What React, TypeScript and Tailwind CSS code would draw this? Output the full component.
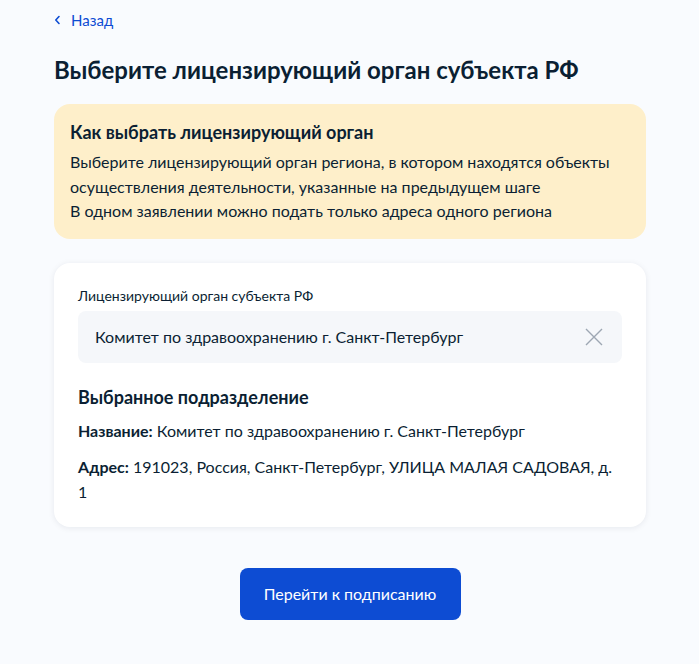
import React from "react";

export default function App() {
  return (
    <div className="min-h-screen bg-[#f9fbfe] font-['Lato','Noto_Sans',sans-serif] text-[#0b1f33]">
      <div className="w-[592px] ml-[54px] pt-[7px]">
        <a href="#" className="inline-flex items-center gap-[10px] text-[15px] text-[#0d4cd3] leading-[24px]">
          <svg width="7" height="10" viewBox="0 0 7 10" fill="none">
            <path d="M5 1.5L1.8 5L5 8.5" stroke="#0d4cd3" strokeWidth="1.6" strokeLinecap="round" strokeLinejoin="round" />
          </svg>
          Назад
        </a>

        <h1 className="mt-[22px] text-[24px] font-bold leading-[32px]">
          Выберите лицензирующий орган субъекта РФ
        </h1>

        <div className="mt-[18px] rounded-[16px] bg-[#feefca] px-4 pt-[16px] pb-[15px]">
          <h2 className="text-[18px] font-bold leading-[24px]">Как выбрать лицензирующий орган</h2>
          <p className="mt-[6px] text-[16px] leading-[24.5px]">
            Выберите лицензирующий орган региона, в котором находятся объекты осуществления деятельности,
            указанные на предыдущем шаге
            <br />
            В одном заявлении можно подать только адреса одного региона
          </p>
        </div>

        <div className="mt-6 rounded-[16px] bg-white px-6 pt-[24px] pb-[23px] shadow-[0_1px_6px_rgba(11,31,51,0.08)]">
          <label className="block text-[14px] leading-[18px]">Лицензирующий орган субъекта РФ</label>
          <div className="mt-[6px] flex h-[52px] items-center justify-between rounded-[8px] bg-[#f5f7fa] pl-[17px] pr-[19px]">
            <span className="text-[16px]">Комитет по здравоохранению г. Санкт-Петербург</span>
            <svg width="18" height="18" viewBox="0 0 18 18" fill="none">
              <path d="M1 1L17 17M17 1L1 17" stroke="#9da7b3" strokeWidth="1.4" />
            </svg>
          </div>

          <h3 className="mt-[22px] text-[18px] font-bold leading-[24px]">Выбранное подразделение</h3>
          <p className="mt-[10px] text-[16px] leading-[24px]">
            <span className="font-bold">Название:</span> Комитет по здравоохранению г. Санкт-Петербург
          </p>
          <p className="mt-[11px] text-[16px] leading-[25px]">
            <span className="font-bold">Адрес:</span> 191023, Россия, Санкт-Петербург, УЛИЦА МАЛАЯ САДОВАЯ, д. 1
          </p>
        </div>

        <div className="mt-[41px] flex justify-center">
          <button className="h-[52px] w-[221px] rounded-[8px] bg-[#0d4cd3] text-[16px] text-white">
            Перейти к подписанию
          </button>
        </div>
      </div>
    </div>
  );
}
